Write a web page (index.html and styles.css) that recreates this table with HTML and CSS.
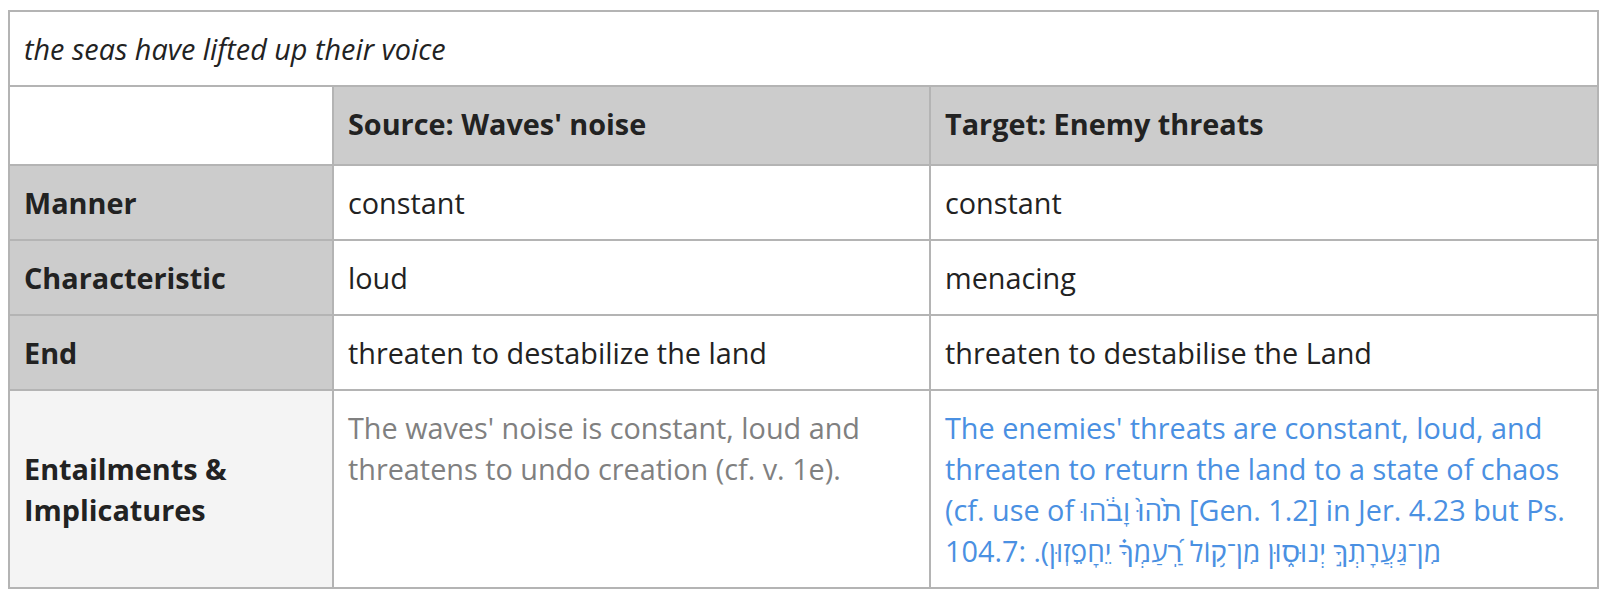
FILE: index.html
```html
<!DOCTYPE html>
<html>
<head>
<meta charset="utf-8">
<link rel="stylesheet" href="styles.css">
</head>
<body>
<table class="meta">
  <colgroup>
    <col class="c-label">
    <col class="c-source">
    <col class="c-target">
  </colgroup>
  <tr><td class="title" colspan="3">the seas have lifted up their voice</td></tr>
  <tr>
    <td class="blank"></td>
    <th class="head">Source: Waves' noise</th>
    <th class="head">Target: Enemy threats</th>
  </tr>
  <tr><th class="label">Manner</th><td>constant</td><td>constant</td></tr>
  <tr><th class="label">Characteristic</th><td>loud</td><td>menacing</td></tr>
  <tr><th class="label">End</th><td>threaten to destabilize the land</td><td>threaten to destabilise the Land</td></tr>
  <tr>
    <th class="label light">Entailments &amp; Implicatures</th>
    <td class="ent src">The waves' noise is constant, loud and threatens to undo creation (cf. v. 1e).</td>
    <td class="ent tgt">The enemies' threats are constant, loud, and threaten to return the land to a state of chaos (cf. use of <span class="heb" lang="he">תֹ֙הוּ֙ וָבֹ֔הוּ</span> [Gen. 1.2] in Jer. 4.23 but Ps. 104.7: <span class="heb" lang="he" dir="rtl">מִן־גַּעֲרָתְךָ֣ יְנוּס֑וּן מִן־ק֥וֹל רַֽ֝עַמְךָ֗ יֵחָפֵזֽוּן).</span></td>
  </tr>
</table>
</body>
</html>
```
FILE: styles.css
```css
html, body {
  background: #ffffff;
}
body {
  margin: 10px 8px;
  font-family: "Open Sans", "Noto Sans", sans-serif;
  font-size: 28.8px;
  color: #222222;
}
.meta {
  border-collapse: collapse;
  width: 1589px;
  table-layout: fixed;
}
.c-label { width: 324px; }
.c-source { width: 597px; }
.c-target { width: 668px; }
.meta td, .meta th {
  border: 2px solid #b4b4b4;
  padding: 16px 14px;
  line-height: 41px;
  text-align: left;
  vertical-align: top;
  font-weight: 400;
}
.meta td.title {
  font-style: italic;
}
.meta th.head {
  padding-top: 16px;
  padding-bottom: 20px;
}
.meta th.head, .meta th.label {
  font-weight: 700;
  background: #cccccc;
  vertical-align: middle;
}
.meta th.label.light {
  background: #f4f4f4;
}
.meta td.src {
  color: #808080;
}
.meta td.tgt {
  color: #4a90e2;
}
.heb {
  font-family: "Open Sans", "DejaVu Sans", sans-serif;
  font-size: 28px;
  line-height: 28px;
}
```
